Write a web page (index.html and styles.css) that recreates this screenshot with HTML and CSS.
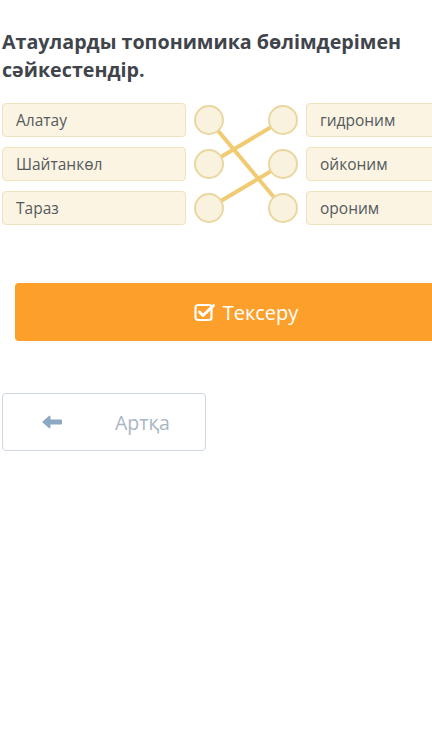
FILE: index.html
```html
<!DOCTYPE html>
<html>
<head>
    <meta charset="utf-8"/>
    <title>Сәйкестендір</title>
    <meta name="viewport" content="width=device-width,initial-scale=1"/>
    <link rel="stylesheet" href="styles.css">
</head>
<body>
<div class="page">
    <h2 class="question">Атауларды топонимика бөлімдерімен сәйкестендір.</h2>

    <div class="match">
        <div class="item left">Алатау</div>
        <div class="item left">Шайтанкөл</div>
        <div class="item left">Тараз</div>

        <svg class="links" width="120" height="122" viewBox="0 0 120 122">
            <!--сызықтар-->
            <line x1="23" y1="17" x2="97" y2="105"/>
            <line x1="23" y1="61" x2="97" y2="17"/>
            <line x1="23" y1="105" x2="97" y2="61"/>
            <!--нүктелер-->
            <circle cx="23" cy="17" r="14"/>
            <circle cx="23" cy="61" r="14"/>
            <circle cx="23" cy="105" r="14"/>
            <circle cx="97" cy="17" r="14"/>
            <circle cx="97" cy="61" r="14"/>
            <circle cx="97" cy="105" r="14"/>
        </svg>

        <div class="item right">гидроним</div>
        <div class="item right">ойконим</div>
        <div class="item right">ороним</div>
    </div>

    <button class="checkBtn">
        <svg width="22" height="20" viewBox="0 0 22 20">
            <rect x="1.5" y="3" width="16" height="15" rx="2.5" fill="none" stroke="#fff" stroke-width="2.2"/>
            <path d="M5.5 10 L9 13.5 L19.5 3.5" fill="none" stroke="#fff" stroke-width="3" stroke-linecap="round" stroke-linejoin="round"/>
        </svg>
        <span>Тексеру</span>
    </button>

    <button class="backBtn">
        <svg width="22" height="14" viewBox="0 0 22 14">
            <path d="M1 7 L8.5 0.5 L9.5 1.5 L9.5 4.5 L20 4.5 Q21 4.5 21 5.5 L21 8.5 Q21 9.5 20 9.5 L9.5 9.5 L9.5 12.5 L8.5 13.5 Z" fill="#8ca8c2"/>
        </svg>
        <span>Артқа</span>
    </button>
</div>
</body>
</html>
```

FILE: styles.css
```css
html, body {
    margin: 0;
    padding: 0;
    background: #fff;
    overflow: hidden;
}

.page {
    width: 488px;
    padding: 28px 0 0 2px;
    font-family: "Open Sans", "Noto Sans", sans-serif;
}

.question {
    margin: 0 0 19px 0;
    font-size: 19.7px;
    line-height: 28px;
    font-weight: 700;
    color: #3f454b;
    width: 420px;
}

.match {
    display: grid;
    grid-template-columns: 184px 120px 184px;
    grid-template-rows: 34px 34px 34px;
    row-gap: 10px;
}

.item {
    box-sizing: border-box;
    background: #fbf4e3;
    border: 1px solid #f0e2bb;
    border-radius: 4px;
    font-size: 15.5px;
    line-height: 32px;
    color: #555a5e;
    padding-left: 13px;
}

.left {
    grid-column: 1;
}

.right {
    grid-column: 3;
}

.match .item:nth-child(1), .match .item:nth-child(5) { grid-row: 1; }
.match .item:nth-child(2), .match .item:nth-child(6) { grid-row: 2; }
.match .item:nth-child(3), .match .item:nth-child(7) { grid-row: 3; }

.links {
    grid-column: 2;
    grid-row: 1 / 4;
}

.links line {
    stroke: #f0cb72;
    stroke-width: 4;
}

.links circle {
    fill: #f9f2df;
    stroke: #ead79f;
    stroke-width: 2;
}

.checkBtn {
    display: flex;
    align-items: center;
    justify-content: center;
    gap: 7px;
    margin: 58px 0 0 13px;
    width: 462px;
    height: 58px;
    border: 0;
    border-radius: 4px;
    background: #fd9f2b;
    color: #fff;
    font-family: "Open Sans", "Noto Sans", sans-serif;
    font-size: 20px;
}

.backBtn {
    display: flex;
    align-items: center;
    margin: 52px 0 0 0;
    width: 204px;
    height: 58px;
    padding: 0 0 0 38px;
    border: 1px solid #cfd8e0;
    border-radius: 4px;
    background: #fff;
    color: #a8b6c3;
    font-family: "Open Sans", "Noto Sans", sans-serif;
    font-size: 19.5px;
}

.backBtn span {
    margin-left: 52px;
}
```
